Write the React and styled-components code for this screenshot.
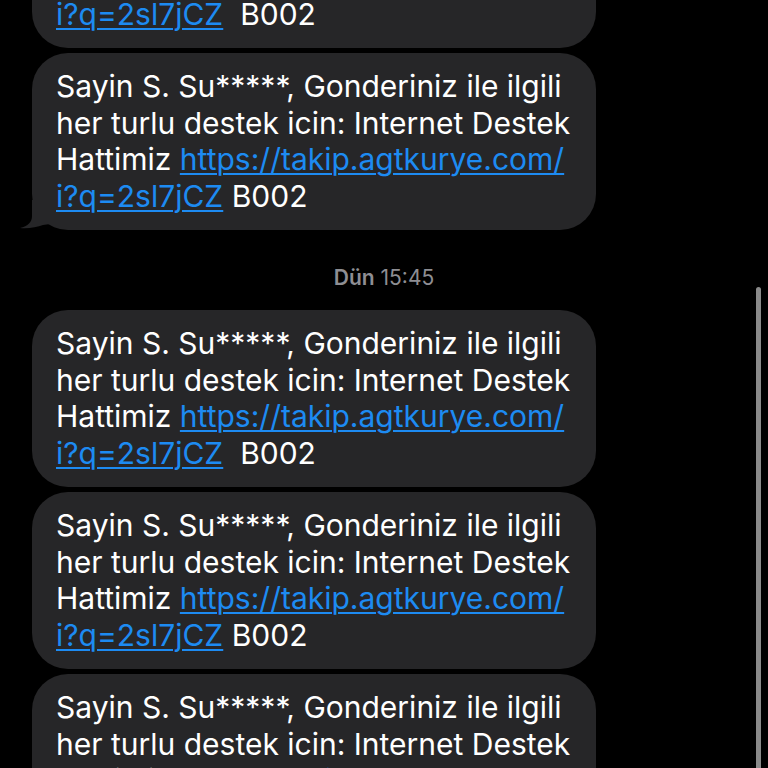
import React from "react";
import styled, { createGlobalStyle } from "styled-components";

const Global = createGlobalStyle`
  html, body { margin: 0; padding: 0; background: #000; }
  body { font-family: Inter, "Noto Sans", sans-serif; }
  #root { height: 768px; }
`;

const Screen = styled.div`
  position: relative;
  width: 768px;
  height: 768px;
  overflow: hidden;
  background: #000;
`;

const Thread = styled.div`
  display: flex;
  flex-direction: column;
  align-items: flex-start;
  gap: 5px;
  padding: 0 0 0 32px;
  margin-top: -129px;
`;

const Bubble = styled.div`
  position: relative;
  box-sizing: border-box;
  width: 564px;
  height: 177px;
  padding: 15px 10px 15px 24px;
  background: #262628;
  border-radius: 36px;
  color: #fff;
  font-family: Inter, "Noto Sans", sans-serif;
  font-size: 30px;
  line-height: 36.7px;
  letter-spacing: 0;
  white-space: pre;
`;

const Link = styled.a`
  color: #1d8bf2;
  text-decoration: underline;
  text-underline-offset: 3px;
  text-decoration-thickness: 2px;
`;

const Tail = styled.svg`
  position: absolute;
  left: -12px;
  bottom: 0;
  width: 30px;
  height: 30px;
`;

const Stamp = styled.div`
  align-self: stretch;
  margin: 33px 32px 17px 0;
  text-align: center;
  font-size: 21px;
  line-height: 20px;
  color: #8e8e93;
  font-family: Inter, "Noto Sans", sans-serif;
`;

const StampDay = styled.span`
  font-weight: 600;
`;

const Scrollbar = styled.div`
  position: absolute;
  right: 7px;
  top: 287px;
  width: 5px;
  height: 520px;
  border-radius: 3px;
  background: #8a8a8a;
`;

function Message({ wide, tail }) {
  return (
    <Bubble>
      {"Sayin S. Su*****, Gonderiniz ile ilgili"}
      <br />
      {"her turlu destek icin: Internet Destek"}
      <br />
      {"Hattimiz "}
      <Link href="#">
        {"https://takip.agtkurye.com/"}
        <br />
        {"i?q=2sl7jCZ"}
      </Link>
      {wide ? "  B002" : " B002"}
      {tail && (
        <Tail viewBox="0 0 30 30">
          <path
            d="M12 0 L12 16 C12 22 8 26 0 28 C8 29 17 27 23 25 L30 24 L30 0 Z"
            fill="#262628"
          />
        </Tail>
      )}
    </Bubble>
  );
}

export default function App() {
  return (
    <>
      <Global />
      <Screen>
        <Thread>
          <Message wide />
          <Message tail />
          <Stamp>
            <StampDay>Dün</StampDay> 15:45
          </Stamp>
          <Message wide />
          <Message />
          <Message />
        </Thread>
        <Scrollbar />
      </Screen>
    </>
  );
}
